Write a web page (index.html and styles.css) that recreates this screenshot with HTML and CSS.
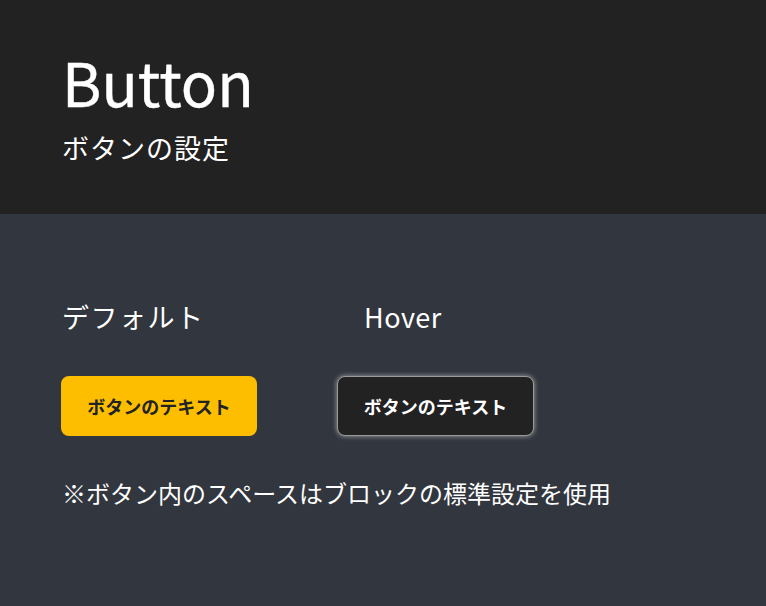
FILE: index.html
```html
<!DOCTYPE html>
<html lang="ja">
<head>
<meta charset="utf-8">
<link rel="stylesheet" href="styles.css">
</head>
<body>
<header class="hero">
  <h1 class="title">Button</h1>
  <p class="subtitle">ボタンの設定</p>
</header>
<main class="content">
  <div class="states">
    <div class="state">
      <div class="label">デフォルト</div>
      <button class="btn btn-default">ボタンのテキスト</button>
    </div>
    <div class="state state-hover">
      <div class="label label-hover">Hover</div>
      <button class="btn btn-hover">ボタンのテキスト</button>
    </div>
  </div>
  <p class="note">※ボタン内のスペースはブロックの標準設定を使用</p>
</main>
</body>
</html>
```
FILE: styles.css
```css
* { box-sizing: border-box; }
html, body { margin: 0; padding: 0; }
body {
  background: #32363e;
  font-family: "Noto Sans CJK JP", "Noto Sans", sans-serif;
  color: #ffffff;
  height: 606px;
  overflow: hidden;
}
.hero {
  background: #222222;
  height: 214px;
  padding: 41px 62px 0;
}
.title {
  margin: 0;
  font-size: 60px;
  font-weight: 400;
  line-height: 80px;
  -webkit-text-stroke: 0.4px #ffffff;
}
.subtitle {
  margin: 7px 0 0;
  font-size: 27px;
  line-height: 40px;
  letter-spacing: 1px;
}
.content {
  padding: 83px 62px 0 61px;
}
.states {
  display: flex;
  gap: 80px;
}
.state {
  display: flex;
  flex-direction: column;
}
.label {
  font-size: 27px;
  line-height: 40px;
  letter-spacing: 1.5px;
  margin-bottom: 39px;
  padding-left: 1px;
}
.label-hover {
  padding-left: 27px;
  letter-spacing: 0.5px;
}
.btn {
  font-family: "Noto Sans CJK JP", sans-serif;
  font-weight: 700;
  font-size: 18px;
  border-radius: 8px;
  height: 60px;
  width: 196px;
  border: none;
  padding: 0;
}
.btn-default {
  background: #fdbe00;
  color: #222222;
}
.btn-hover {
  background: #222222;
  color: #ffffff;
  width: 197px;
  border: 1px solid #9a9a9a;
  box-shadow: 0 0 4px 1px rgba(255,255,255,0.4);
}
.note {
  margin: 39px 0 0 1px;
  font-size: 24px;
  line-height: 36px;
  letter-spacing: 0;
}
```
